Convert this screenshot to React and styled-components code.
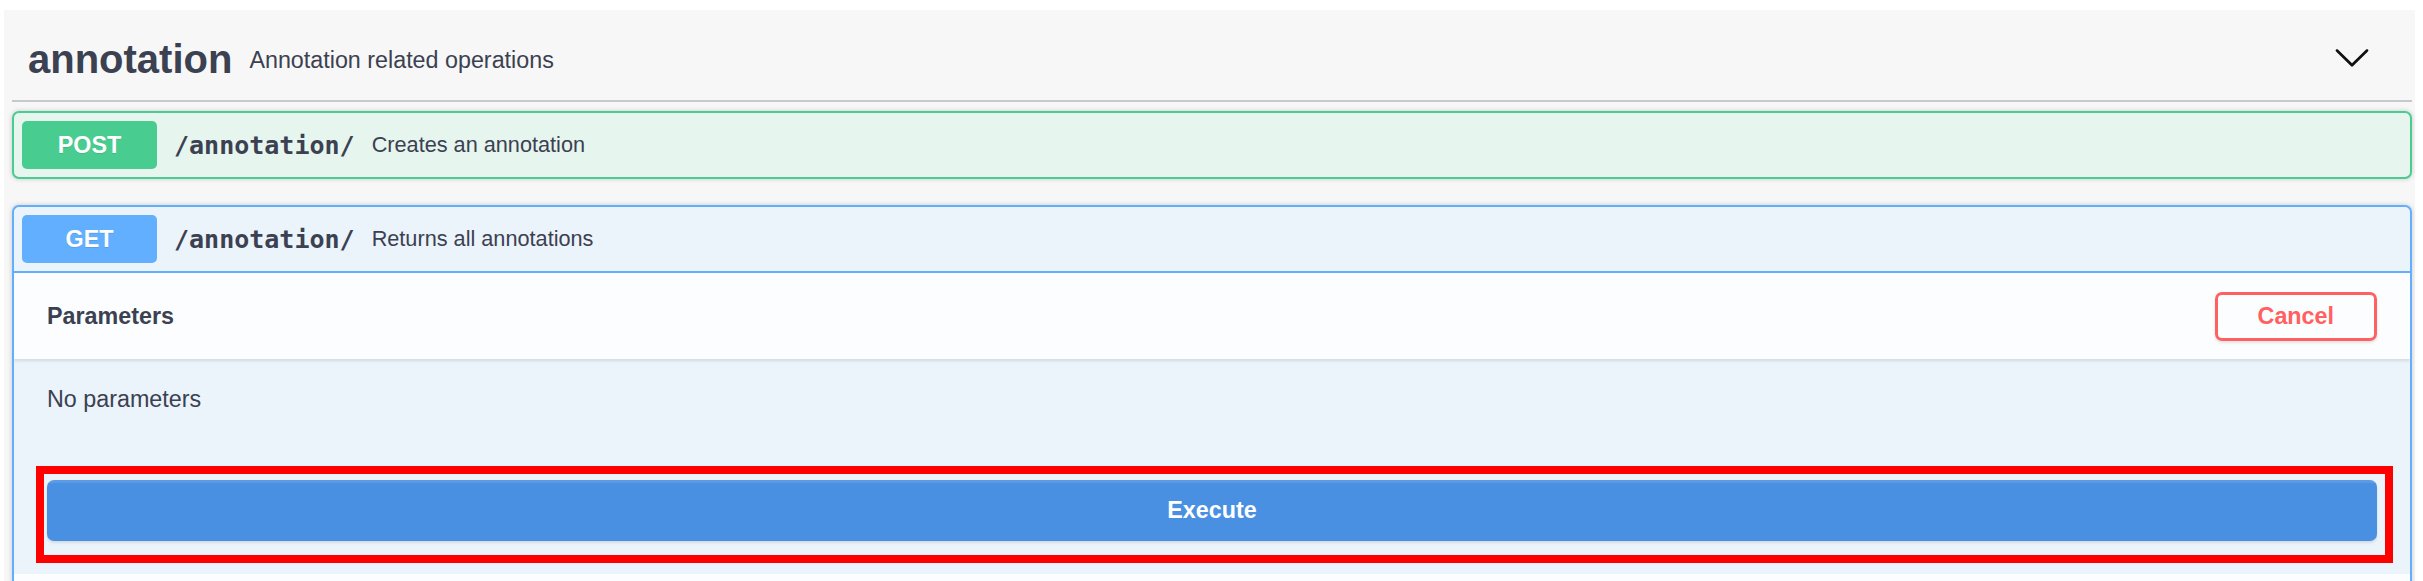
import React from "react";
import styled, { createGlobalStyle } from "styled-components";

const GlobalStyle = createGlobalStyle`
  html, body {
    margin: 0;
    padding: 0;
    overflow: hidden;
    background: #ffffff;
    font-family: "Liberation Sans", Arial, sans-serif;
    color: #3b4151;
  }
  * { box-sizing: border-box; }
`;

const METHODS = {
  post: { main: "#49cc90", tint: "#e6f5ee" },
  get: { main: "#61affe", tint: "#ebf3fb" },
};

const Page = styled.div`
  margin: 10px 8px 0 4px;
  padding: 0 3px 0 8px;
  background: #f7f7f7;
  min-height: 600px;
`;

const TagHeader = styled.h3`
  display: flex;
  align-items: center;
  height: 92px;
  margin: 0 0 9px;
  padding: 0 41px 0 16px;
  border-bottom: 2px solid rgba(59, 65, 81, 0.25);
  font-weight: 400;
`;

const TagName = styled.span`
  margin-top: 8px;
  font-size: 40px;
  line-height: 1;
  font-weight: 700;
  color: #3b4151;
`;

const TagDescription = styled.small`
  flex: 1;
  margin-top: 12px;
  padding: 0 17px;
  font-size: 23.3px;
  line-height: 1;
  color: #3b4151;
`;

const ExpandButton = styled.button`
  display: flex;
  margin-top: 4px;
  padding: 0;
  border: none;
  background: transparent;
`;

const OpBlock = styled.div`
  margin: 0 0 26px;
  border: 2px solid ${(p) => METHODS[p.$method].main};
  border-radius: 7px;
  background: ${(p) => METHODS[p.$method].tint};
  box-shadow: 0 0 5px rgba(0, 0, 0, 0.19);
  overflow: hidden;
`;

const Summary = styled.div`
  display: flex;
  align-items: center;
  padding: 8px;
  border-bottom: ${(p) => (p.$open ? `2px solid ${METHODS[p.$method].main}` : "none")};
`;

const MethodBadge = styled.span`
  width: 135px;
  padding: 10px 0;
  border-radius: 5px;
  background: ${(p) => METHODS[p.$method].main};
  color: #ffffff;
  font-size: 23.3px;
  line-height: 28px;
  font-weight: 700;
  text-align: center;
  text-shadow: 0 1px 0 rgba(0, 0, 0, 0.1);
`;

const Path = styled.span`
  padding: 0 17px;
  font-family: "DejaVu Sans Mono", "Liberation Mono", monospace;
  font-size: 25px;
  font-weight: 700;
  color: #3b4151;
`;

const SummaryText = styled.span`
  font-size: 21.7px;
  color: #3b4151;
`;

const SectionHeader = styled.div`
  display: flex;
  align-items: center;
  height: 86px;
  padding: 0 33px;
  background: rgba(255, 255, 255, 0.8);
  box-shadow: 0 2px 3px rgba(0, 0, 0, 0.1);
`;

const SectionTitle = styled.h4`
  flex: 1;
  margin: 0;
  font-size: 23.3px;
  font-weight: 700;
  color: #3b4151;
`;

const CancelButton = styled.button`
  padding: 8px 40px;
  border: 3px solid #ff6060;
  border-radius: 7px;
  background: transparent;
  box-shadow: 0 2px 3px rgba(0, 0, 0, 0.1);
  color: #ff6060;
  font-family: "Liberation Sans", Arial, sans-serif;
  font-size: 23.3px;
  line-height: 27px;
  font-weight: 700;
`;

const DescriptionWrapper = styled.div`
  margin: 0 0 8px;
  padding: 25px 33px;
  p {
    margin: 0;
    font-size: 23.3px;
    line-height: 30px;
    color: #3b4151;
  }
`;

const ExecuteWrapper = styled.div`
  padding: 33px;
`;

const Highlight = styled.div`
  position: relative;
  &::after {
    content: "";
    position: absolute;
    top: -14px;
    left: -11px;
    right: -16px;
    bottom: -22px;
    border: 8px solid #ff0000;
    pointer-events: none;
  }
`;

const ExecuteButton = styled.button`
  display: block;
  width: 100%;
  padding: 14px 23px;
  border: 3px solid #4990e2;
  border-top-color: #5b9be6;
  border-radius: 7px;
  background: #4990e2;
  box-shadow: 0 2px 3px rgba(0, 0, 0, 0.1);
  color: #ffffff;
  font-family: "Liberation Sans", Arial, sans-serif;
  font-size: 23.3px;
  line-height: 27px;
  font-weight: 700;
`;

function Chevron() {
  return (
    <svg width="38" height="38" viewBox="0 0 20 20" aria-hidden="true">
      <path
        fill="#111"
        d="M17.418 6.109c.272-.268.709-.268.979 0s.271.701 0 .969l-7.908 7.83c-.27.268-.707.268-.979 0l-7.908-7.83c-.27-.268-.27-.701 0-.969.271-.268.709-.268.979 0L10 13.25l7.418-7.141z"
      />
    </svg>
  );
}

export default function App() {
  return (
    <Page>
      <GlobalStyle />
      <TagHeader>
        <TagName>annotation</TagName>
        <TagDescription>Annotation related operations</TagDescription>
        <ExpandButton>
          <Chevron />
        </ExpandButton>
      </TagHeader>

      <OpBlock $method="post">
        <Summary $method="post">
          <MethodBadge $method="post">POST</MethodBadge>
          <Path>/annotation/</Path>
          <SummaryText>Creates an annotation</SummaryText>
        </Summary>
      </OpBlock>

      <OpBlock $method="get">
        <Summary $method="get" $open>
          <MethodBadge $method="get">GET</MethodBadge>
          <Path>/annotation/</Path>
          <SummaryText>Returns all annotations</SummaryText>
        </Summary>
        <SectionHeader>
          <SectionTitle>Parameters</SectionTitle>
          <CancelButton>Cancel</CancelButton>
        </SectionHeader>
        <DescriptionWrapper>
          <p>No parameters</p>
        </DescriptionWrapper>
        <ExecuteWrapper>
          <Highlight>
            <ExecuteButton>Execute</ExecuteButton>
          </Highlight>
        </ExecuteWrapper>
        <SectionHeader />
      </OpBlock>
    </Page>
  );
}
